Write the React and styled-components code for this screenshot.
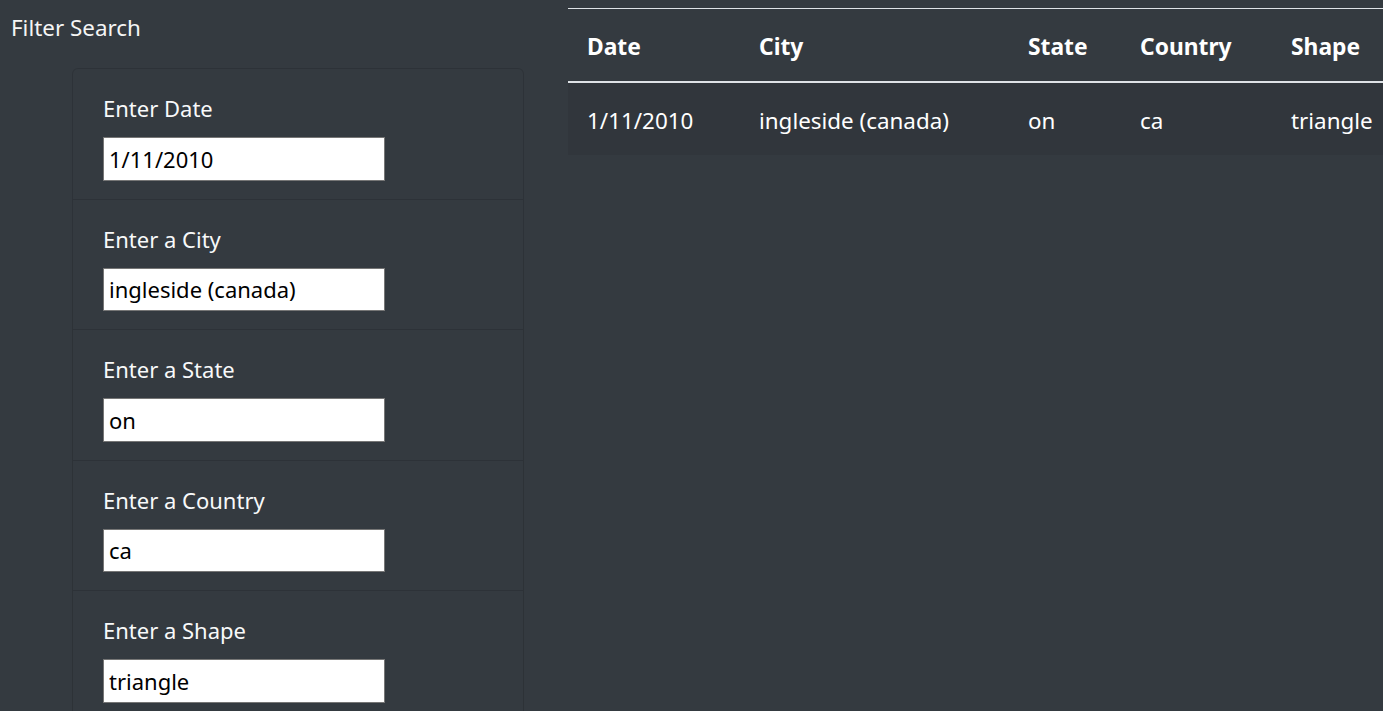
import React from "react";
import styled, { createGlobalStyle } from "styled-components";

const GlobalStyle = createGlobalStyle`
  html, body {
    margin: 0;
    padding: 0;
    background-color: #343a40;
    font-family: "Noto Sans", "Open Sans", sans-serif;
    color: #fff;
  }
`;

const filters = [
  { label: "Enter Date", value: "1/11/2010" },
  { label: "Enter a City", value: "ingleside (canada)" },
  { label: "Enter a State", value: "on" },
  { label: "Enter a Country", value: "ca" },
  { label: "Enter a Shape", value: "triangle" },
];

const columns = [
  { key: "date", title: "Date", width: 172 },
  { key: "city", title: "City", width: 269 },
  { key: "state", title: "State", width: 112 },
  { key: "country", title: "Country", width: 151 },
  { key: "shape", title: "Shape", width: 140 },
];

const rows = [
  {
    date: "1/11/2010",
    city: "ingleside (canada)",
    state: "on",
    country: "ca",
    shape: "triangle",
  },
];

const App = () => {
  return (
    <Page>
      <GlobalStyle />
      <Sidebar>
        <Title>Filter Search</Title>
        <FilterList>
          {filters.map((f) => (
            <FilterItem key={f.label}>
              <Label>{f.label}</Label>
              <Input type="text" defaultValue={f.value} />
            </FilterItem>
          ))}
        </FilterList>
      </Sidebar>
      <TableWrap>
        <Table>
          <thead>
            <tr>
              {columns.map((c) => (
                <Th key={c.key} $width={c.width}>
                  {c.title}
                </Th>
              ))}
            </tr>
          </thead>
          <tbody>
            {rows.map((r, i) => (
              <BodyRow key={i}>
                {columns.map((c) => (
                  <Td key={c.key}>{r[c.key]}</Td>
                ))}
              </BodyRow>
            ))}
          </tbody>
        </Table>
      </TableWrap>
    </Page>
  );
};

const Page = styled.div`
  display: grid;
  grid-template-columns: 568px 1fr;
  height: 711px;
  overflow: hidden;
`;

const Sidebar = styled.div`
  display: flex;
  flex-direction: column;
`;

const Title = styled.h1`
  margin: 0;
  padding: 13px 11px 0;
  height: 68px;
  box-sizing: border-box;
  font-size: 22.4px;
  font-weight: 400;
  line-height: 30px;
  color: #f5f5f5;
`;

const FilterList = styled.div`
  margin-left: 72px;
  width: 450px;
  border: 1px solid rgba(0, 0, 0, 0.125);
  border-bottom: none;
  border-radius: 6px 6px 0 0;
`;

const FilterItem = styled.div`
  display: flex;
  flex-direction: column;
  align-items: flex-start;
  padding: 24px 30px 18px;
  height: 130.5px;
  box-sizing: border-box;
  border-bottom: 1px solid rgba(0, 0, 0, 0.125);
`;

const Label = styled.label`
  font-size: 22px;
  line-height: 30px;
  margin-bottom: 14px;
  color: #f8f9fa;
`;

const Input = styled.input`
  width: 282px;
  height: 44px;
  box-sizing: border-box;
  padding: 0 5px;
  border: 1px solid #767676;
  border-radius: 0;
  background: #fff;
  color: #000;
  font-family: "Noto Sans", "Open Sans", sans-serif;
  font-size: 22px;
  outline: none;
`;

const TableWrap = styled.div`
  padding-top: 8px;
  overflow: hidden;
`;

const Table = styled.table`
  border-collapse: collapse;
  width: 844px;
  table-layout: fixed;
  color: #fff;
  font-size: 22.4px;
`;

const Th = styled.th`
  box-sizing: border-box;
  width: ${(p) => p.$width}px;
  text-align: left;
  font-weight: 700;
  font-size: 22.8px;
  padding: 20px 19px 16px;
  line-height: 36px;
  border-top: 1px solid #dee2e6;
  border-bottom: 2px solid #dee2e6;
  white-space: nowrap;
`;

const BodyRow = styled.tr`
  background-color: #31363c;
`;

const Td = styled.td`
  padding: 20px 19px 16px;
  line-height: 36px;
  white-space: nowrap;
`;

export default App;
